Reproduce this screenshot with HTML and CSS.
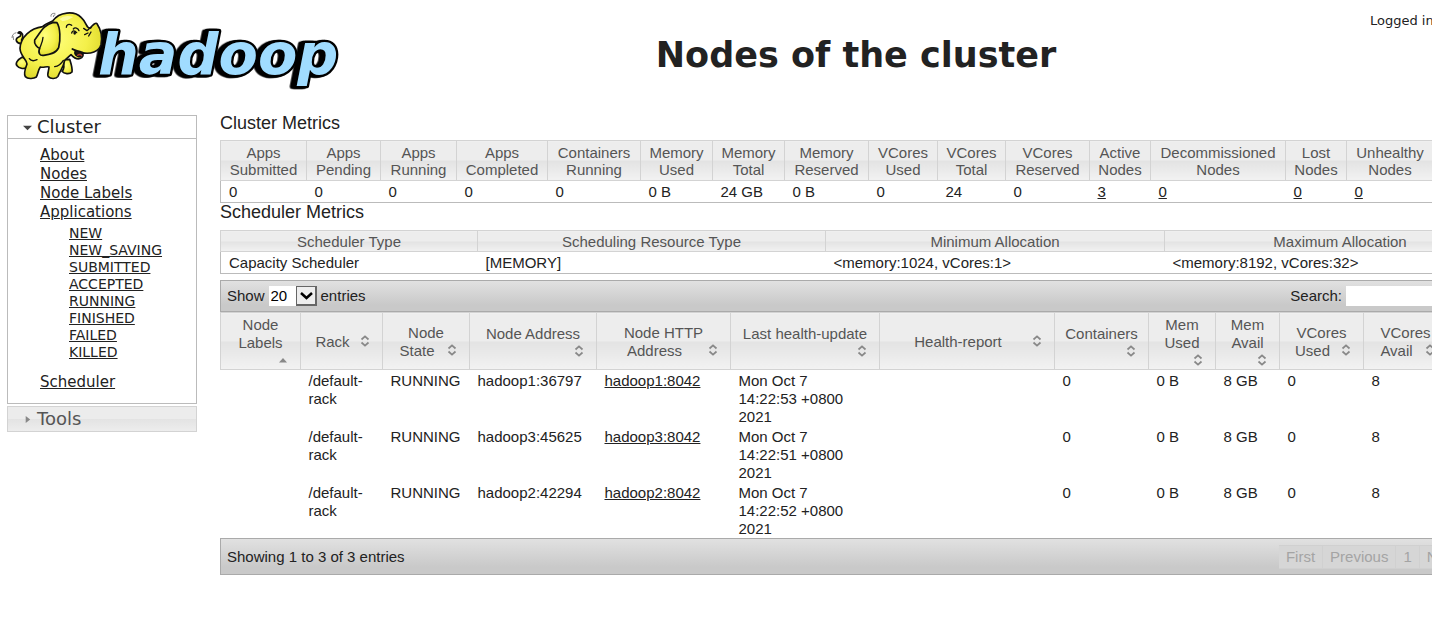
FILE: index.html
```html
<!DOCTYPE html>
<html lang="en">
<head>
<meta charset="utf-8">
<title>Nodes of the cluster</title>
<link rel="stylesheet" href="styles.css">
</head>
<body>
<svg class="defs" width="0" height="0" aria-hidden="true">
  <symbol id="sort-both" viewBox="0 0 16 16"><path d="M4.5 6.5 8 3.3l3.500 3.200M4.500 9.500 8 12.700l3.500-3.200" fill="none" stroke="#888" stroke-width="1.700"/></symbol>
  <symbol id="sort-asc" viewBox="0 0 16 16"><path d="M4 10.500h8L8 6z" fill="#888"/></symbol>
</svg>
<div class="page">
  <header class="header">
    <svg class="logo" viewBox="0 0 1050 300" role="img" aria-label="Hadoop">
      <defs>
        <radialGradient id="skin" cx="40%" cy="40%" r="70%">
          <stop offset="0" stop-color="#ffff7d"/><stop offset="0.600" stop-color="#f4f04a"/><stop offset="1" stop-color="#d9d324"/>
        </radialGradient>
      </defs>
      <text class="word" x="294" y="222">hadoop</text>
      <g stroke="#111" stroke-width="5" stroke-linejoin="round" stroke-linecap="round" fill="url(#skin)">
        <path d="M63 131C48 130 44 116 55 112C64 108 66 99 54 99C60 92 70 99 68 110C68 119 60 119 68 124"/>
        <path d="M66 172C52 180 45 190 51 197C57 205 70 208 79 203L88 180Z"/>
        <path d="M188 179C193 193 193 206 186 214C192 222 209 224 216 216C218 203 213 191 209 178Z"/>
        <path d="M128 80C91 85 62 111 60 145C61 170 81 178 81 192C76 205 70 222 76 230C84 239 103 235 109 231C114 220 115 209 121 201C132 204 138 198 147 201C147 212 140 223 145 230C152 238 169 237 174 229C180 212 191 201 194 181L213 164C224 176 236 180 245 173C250 168 249 161 247 158C270 164 298 154 303 134C308 109 301 86 291 71C288 67 276 75 272 84C258 87 263 70 244 53C223 31 178 35 158 63C147 68 134 73 128 80Z"/>
        <path d="M160 67C132 73 121 98 104 120C101 132 113 143 119 145C113 159 120 168 131 166C147 164 168 161 176 143C182 121 181 82 171 68Z"/>
        <path d="M119 145C122 136 128 128 129 112M88 176C93 183 103 183 111 179M164 200C174 199 184 191 190 181M199 82C199 74 207 70 215 76M251 85L261 92L273 81M254 104L264 99M266 108L273 96" fill="none" stroke-width="4"/>
        <path d="M215 99C217 92 223 90 230 98M220 87C225 80 234 85 237 92" fill="none" stroke-width="4"/>
        <ellipse cx="224" cy="99" rx="4" ry="5" fill="#111" stroke="none"/>
        <path d="M217 147C224 152 234 152 246 157C248 169 240 173 232 168C226 165 224 158 226 152" fill="#221a12"/>
        <path d="M233 166C238 162 243 163 245 167" fill="none" stroke="#b33d31" stroke-width="4"/>
      </g>
      <g fill="none" stroke="#888" stroke-width="3"><path d="M36 114Q36 101 49 98M41 120 39 108M153 50Q151 39 166 40M160 51Q160 44 166 44"/></g>
      <path d="M178 57Q195 43 220 51Q204 61 188 64Z" fill="#ffffc2" opacity="0.700"/>
    </svg>
    <h1 class="title">Nodes of the cluster</h1>
    <div class="user">Logged in as: dr.who</div>
  </header>
  <div class="layout">
    <nav class="nav">
      <h3 class="nav-head open"><svg class="tri" viewBox="0 0 10 10"><path d="M0 3h10L5 8z" fill="#444"/></svg>Cluster</h3>
      <div class="nav-body">
        <ul class="links">
          <li><a href="#">About</a></li>
          <li><a href="#">Nodes</a></li>
          <li><a href="#">Node Labels</a></li>
          <li><a href="#">Applications</a>
            <ul class="states">
              <li><a href="#">NEW</a></li>
              <li><a href="#">NEW_SAVING</a></li>
              <li><a href="#">SUBMITTED</a></li>
              <li><a href="#">ACCEPTED</a></li>
              <li><a href="#">RUNNING</a></li>
              <li><a href="#">FINISHED</a></li>
              <li><a href="#">FAILED</a></li>
              <li><a href="#">KILLED</a></li>
            </ul>
          </li>
          <li><a href="#">Scheduler</a></li>
        </ul>
      </div>
      <h3 class="nav-head"><svg class="tri" viewBox="0 0 10 10"><path d="M3 1v8l5-4z" fill="#888"/></svg>Tools</h3>
    </nav>
    <main class="main">
      <h2 class="section">Cluster Metrics</h2>
      <table class="metrics">
        <colgroup><col class="w86"><col class="w74"><col class="w76"><col class="w91"><col class="w93"><col class="w72"><col class="w72"><col class="w84"><col class="w69"><col class="w68"><col class="w84"><col class="w61"><col class="w135"><col class="w61"><col class="w87"><col></colgroup>
        <thead><tr>
          <th>Apps Submitted</th><th>Apps Pending</th><th>Apps Running</th><th>Apps Completed</th><th>Containers Running</th><th>Memory Used</th><th>Memory Total</th><th>Memory Reserved</th><th>VCores Used</th><th>VCores Total</th><th>VCores Reserved</th><th>Active Nodes</th><th>Decommissioned Nodes</th><th>Lost Nodes</th><th>Unhealthy Nodes</th><th>Rebooted Nodes</th>
        </tr></thead>
        <tbody><tr>
          <td>0</td><td>0</td><td>0</td><td>0</td><td>0</td><td>0 B</td><td>24 GB</td><td>0 B</td><td>0</td><td>24</td><td>0</td><td><a href="#">3</a></td><td><a href="#">0</a></td><td><a href="#">0</a></td><td><a href="#">0</a></td><td><a href="#">0</a></td>
        </tr></tbody>
      </table>
      <h2 class="section second">Scheduler Metrics</h2>
      <table class="metrics scheduler">
        <colgroup><col class="w257"><col class="w348"><col class="w339"><col></colgroup>
        <thead><tr><th>Scheduler Type</th><th>Scheduling Resource Type</th><th>Minimum Allocation</th><th>Maximum Allocation</th></tr></thead>
        <tbody><tr><td>Capacity Scheduler</td><td>[MEMORY]</td><td>&lt;memory:1024, vCores:1&gt;</td><td>&lt;memory:8192, vCores:32&gt;</td></tr></tbody>
      </table>
      <div class="bar top">
        <label class="length">Show
          <span class="picker"><select><option>20</option><option>40</option><option>60</option></select><svg viewBox="0 0 21 20"><path d="M0 0h21v20H0z" fill="#666"/><path d="M1 1h18v17H1z" fill="#eee"/><path d="M5 7l5.500 5L16 7" fill="none" stroke="#000" stroke-width="2.500"/></svg></span>
          entries</label>
        <label class="search">Search: <input type="text"></label>
      </div>
      <table class="nodes">
        <colgroup><col class="w80"><col class="w82"><col class="w87"><col class="w127"><col class="w134"><col class="w149"><col class="w175"><col class="w94"><col class="w67"><col class="w64"><col class="w84"><col class="w84"><col></colgroup>
        <thead><tr>
          <th>Node Labels<svg class="sort"><use href="#sort-asc"/></svg></th>
          <th>Rack<svg class="sort"><use href="#sort-both"/></svg></th>
          <th>Node State<svg class="sort"><use href="#sort-both"/></svg></th>
          <th>Node Address<svg class="sort"><use href="#sort-both"/></svg></th>
          <th>Node HTTP Address<svg class="sort"><use href="#sort-both"/></svg></th>
          <th>Last health-update<svg class="sort"><use href="#sort-both"/></svg></th>
          <th>Health-report<svg class="sort"><use href="#sort-both"/></svg></th>
          <th>Containers<svg class="sort"><use href="#sort-both"/></svg></th>
          <th>Mem Used<svg class="sort"><use href="#sort-both"/></svg></th>
          <th>Mem Avail<svg class="sort"><use href="#sort-both"/></svg></th>
          <th>VCores Used<svg class="sort"><use href="#sort-both"/></svg></th>
          <th>VCores Avail<svg class="sort"><use href="#sort-both"/></svg></th>
          <th>Version</th>
        </tr></thead>
        <tbody>
          <tr><td></td><td>/default-rack</td><td>RUNNING</td><td>hadoop1:36797</td><td><a href="#">hadoop1:8042</a></td><td class="date">Mon Oct 7 14:22:53 +0800 2021</td><td></td><td>0</td><td>0 B</td><td>8 GB</td><td>0</td><td>8</td><td></td></tr>
          <tr><td></td><td>/default-rack</td><td>RUNNING</td><td>hadoop3:45625</td><td><a href="#">hadoop3:8042</a></td><td class="date">Mon Oct 7 14:22:51 +0800 2021</td><td></td><td>0</td><td>0 B</td><td>8 GB</td><td>0</td><td>8</td><td></td></tr>
          <tr><td></td><td>/default-rack</td><td>RUNNING</td><td>hadoop2:42294</td><td><a href="#">hadoop2:8042</a></td><td class="date">Mon Oct 7 14:22:52 +0800 2021</td><td></td><td>0</td><td>0 B</td><td>8 GB</td><td>0</td><td>8</td><td></td></tr>
        </tbody>
      </table>
      <div class="bar bottom">
        <span>Showing 1 to 3 of 3 entries</span>
        <div class="pager"><button disabled>First</button><button disabled>Previous</button><button disabled>1</button><button disabled>Next</button><button disabled>Last</button></div>
      </div>
    </main>
  </div>
</div>
</body>
</html>
```
FILE: styles.css
```css
* { box-sizing: border-box; }
body {
  margin: 0;
  overflow: hidden;
  background: #fff;
  color: #222;
  font: 15px/18px "Liberation Sans", Arial, sans-serif;
}
.defs { position: absolute; }
a { color: #222; text-decoration: underline; }
/* The tables run wider than the window. */
.page { width: calc(100% + 92px); padding-right: 8px; }

.header {
  display: flex;
  align-items: flex-start;
  height: 116px;
  font-family: "DejaVu Sans", Verdana, sans-serif;
}
.logo { width: 350px; height: 100px; flex: none; }
.word {
  font: italic bold 172px "DejaVu Sans", sans-serif;
  fill: #a0dcff;
  stroke: #000;
  stroke-width: 14px;
  stroke-linejoin: round;
  paint-order: stroke;
  filter: drop-shadow(-8px 2px 0 #000) drop-shadow(-6px 0 0 #000);
}
.title {
  flex: 1;
  margin: 33px 0 0;
  padding-right: 8px;
  text-align: center;
  font-size: 35px;
  line-height: 44px;
}
.user { width: 146px; margin-top: 12px; font-size: 13px; white-space: nowrap; }

.layout {
  display: grid;
  grid-template-columns: 190px minmax(0, 1fr);
  column-gap: 23px;
  align-items: start;
  padding-left: 7px;
}
.nav { margin-top: -1px; font-family: "DejaVu Sans", Verdana, sans-serif; }
.nav-head {
  display: flex;
  align-items: center;
  gap: 5px;
  height: 26px;
  margin: 2px 0 0;
  padding-left: 15px;
  border: 1px solid #d3d3d3;
  background: linear-gradient(#ececec 50%, #e3e3e3 50%, #ededed);
  color: #555;
  font-size: 18px;
  font-weight: normal;
}
.nav-head.open { height: 24px; margin: 0; border-color: #bbb; background: #fff; color: #222; }
.tri { width: 9px; height: 9px; }
.nav-body { border: 1px solid #bbb; border-top: 0; padding: 7px 0 11px 32px; }
.links, .states { margin: 0; padding: 0; list-style: none; }
.links { line-height: 19px; }
.states { padding: 3px 0 12px 29px; font-size: 14px; line-height: 17px; }

.section { height: 24px; margin: -5px 0 5px; font-size: 18px; font-weight: normal; line-height: 24px; }
.section.second { margin: -3px 0 6px; }

table { width: 100%; table-layout: fixed; border-collapse: collapse; }
th {
  border: 1px solid #d3d3d3;
  background: linear-gradient(#ededed 50%, #e3e3e3 50%, #f2f2f2);
  color: #555;
  font-weight: normal;
}
.metrics { border: 1px solid #bbb; }
.metrics th { padding: 3px 6px 2px; line-height: 17px; }
.metrics td { padding: 2px 8px 1px; white-space: nowrap; }
.scheduler th { padding: 2px 6px 1px; }
.nodes th { padding: 3px 9px 1px; }
.nodes td { height: 56px; padding: 2px 8px 0; vertical-align: top; }
.nodes .date { padding-right: 24px; }
.sort { float: right; width: 16px; height: 16px; margin-left: 2px; }

.bar {
  display: flex;
  justify-content: space-between;
  align-items: center;
  border: 1px solid #aaa;
  background: linear-gradient(#e1e1e1, #c9c9c9 80%);
  padding: 0 6px;
}
.top { height: 32px; margin-top: 6px; }
.bottom { height: 37px; }
.length, .search { display: flex; align-items: center; gap: 4px; }
.picker { position: relative; width: 48px; height: 20px; }
.picker select {
  width: 48px;
  height: 20px;
  padding: 0 2px;
  border: 0;
  appearance: none;
  background: #fff;
  color: #000;
  font: 15px/20px "Liberation Sans", Arial, sans-serif;
}
.picker svg { position: absolute; top: 0; right: 0; width: 21px; height: 20px; pointer-events: none; }
.search input { width: 163px; height: 20px; border: 0; background: #fff; }
.pager { display: flex; }
.pager button {
  height: 24px;
  padding: 0 7px;
  border: 1px solid #d0d0d0;
  border-left-width: 0;
  background: #d6d6d6;
  color: #a4a4a4;
  font: 15px "Liberation Sans", Arial, sans-serif;
}

.w61 { width: 61px; } .w64 { width: 64px; } .w67 { width: 67px; } .w68 { width: 68px; }
.w69 { width: 69px; } .w72 { width: 72px; } .w74 { width: 74px; } .w76 { width: 76px; }
.w80 { width: 80px; } .w82 { width: 82px; } .w84 { width: 84px; } .w86 { width: 86px; }
.w87 { width: 87px; } .w91 { width: 91px; } .w93 { width: 93px; } .w94 { width: 94px; }
.w127 { width: 127px; } .w134 { width: 134px; } .w135 { width: 135px; } .w149 { width: 149px; }
.w175 { width: 175px; } .w257 { width: 257px; } .w339 { width: 339px; } .w348 { width: 348px; }
```
